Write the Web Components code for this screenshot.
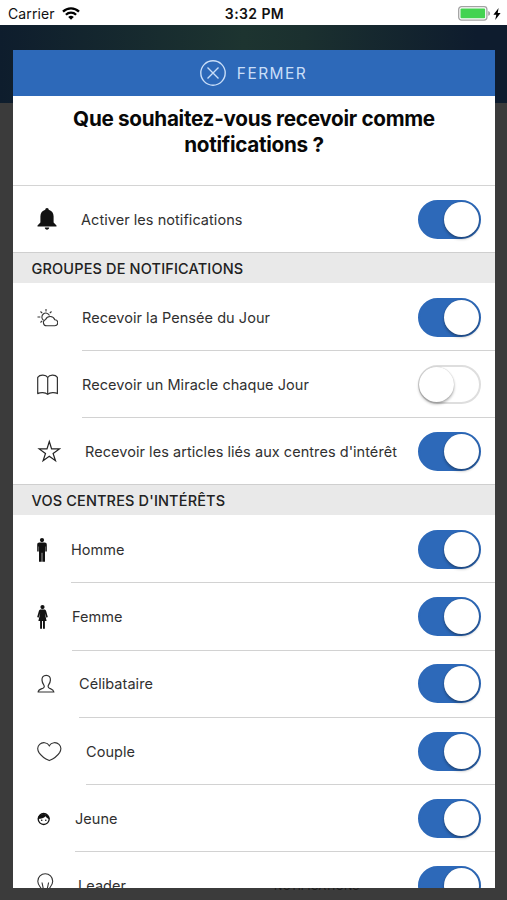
<!DOCTYPE html>
<html lang="fr">
<head>
<meta charset="utf-8">
<title>Notifications</title>
<style>
  html, body {
    margin: 0;
    height: 100%;
    overflow: hidden;
    background: #3b3b3b;
  }
  body {
    font-family: Inter, "Liberation Sans", sans-serif;
    color: #303030;
  }
</style>
</head>
<body>
<notifications-screen>
  <status-bar slot="status" carrier="Carrier" time="3:32 PM"></status-bar>
  <modal-sheet close-label="FERMER">
    <sheet-title>Que souhaitez-vous recevoir comme<br>notifications ?</sheet-title>
    <toggle-row icon="bell" class="last" checked>Activer les notifications</toggle-row>
    <list-divider>GROUPES DE NOTIFICATIONS</list-divider>
    <toggle-row icon="weather" checked>Recevoir la Pensée du Jour</toggle-row>
    <toggle-row icon="book">Recevoir un Miracle chaque Jour</toggle-row>
    <toggle-row icon="star" class="last" checked>Recevoir les articles liés aux centres d'intérêt</toggle-row>
    <list-divider>VOS CENTRES D'INTÉRÊTS</list-divider>
    <toggle-row icon="man" checked>Homme</toggle-row>
    <toggle-row icon="woman" checked>Femme</toggle-row>
    <toggle-row icon="person" checked>Célibataire</toggle-row>
    <toggle-row icon="heart" checked>Couple</toggle-row>
    <toggle-row icon="face" checked>Jeune</toggle-row>
    <toggle-row icon="bulb" checked>Leader</toggle-row>
  </modal-sheet>
</notifications-screen>

<script>
// width is the space the glyph takes in the row, the label follows it
const ICONS = {
  bell: { width: 20, height: 24, body: `
    <path fill="#111" d="M10 1c1.1 0 1.700.8 1.700 1.800 3 .8 4.900 3.100 4.900 6.500v6.200l2.900 3.100v.9H.5v-.9l2.900-3.100V9.300c0-3.400 1.900-5.700 4.900-6.500C8.300 1.800 8.900 1 10 1zM7.800 20.600h4.400c0 1.300-1 2.200-2.200 2.200s-2.200-.9-2.200-2.200z"/>` },
  weather: { width: 21, height: 20, body: `
    <g fill="none" stroke="#333" stroke-width="1.100">
      <path d="M6.500 12.300A4 4 0 1 1 12.500 7.400"/>
      <path d="M9 1v2.600M3.500 3.500l1.700 1.700M.5 9h2.800M3.500 14.500l1.700-1.700M14.500 3.500l-1.700 1.700"/>
      <path d="M9.700 17.800h8a3 3 0 0 0 .1-6 5 5 0 0 0-9.200-.4 3.300 3.300 0 0 0 1.100 6.400z"/>
    </g>` },
  book: { width: 21, height: 22, body: `
    <path fill="none" stroke="#333" stroke-width="1.200" stroke-linejoin="round" d="M10.700 3.500C9 .5 3 .2.700 3.300V19.600c2.800-1.500 7.500-1.500 10 .8 2.500-2.300 7.200-2.300 9.700-.8V3.300C18.200.2 12.500.5 10.700 3.500zM10.700 3.500v17"/>` },
  star: { width: 24, height: 24, body: `
    <path fill="none" stroke="#222" stroke-width="1.200" d="M12.300 2.500l2.300 7.400h7.800l-6.300 4.500 2.400 7.300-6.200-4.500-6.200 4.500 2.400-7.300-6.300-4.500H10z"/>` },
  man: { width: 10, height: 26, body: `
    <g fill="#111"><circle cx="5" cy="3.100" r="2.100"/>
    <path d="M2.400 5.600h5.200c1.400 0 2.200.9 2.200 2.200v6.700H8.300V9.400H8v15.400H5.300v-9h-.6v9H2V9.400h-.3v5.100H.2V7.800C.2 6.500 1 5.600 2.400 5.600z"/></g>` },
  woman: { width: 11, height: 26, body: `
    <g fill="#111"><circle cx="5.500" cy="3.100" r="2.100"/>
    <path d="M4 5.600h3c1.300 0 1.900.6 2.200 1.700l1.600 5.800-1.300.6-1.700-4.600 1.800 7.900H7.900v7.800H6V17h-1v7.800H3.100V17H1.400l1.800-7.900-1.700 4.600-1.300-.6 1.600-5.800C2.100 6.200 2.700 5.600 4 5.600z"/></g>` },
  person: { width: 18, height: 20, body: `
    <path fill="none" stroke="#333" stroke-width="1.200" stroke-linejoin="round" d="M9.200 1.400c2.900 0 4.400 1.900 4.200 4.700-.1 2.100-.9 3.600-1.900 5.100-.7 1.100-.4 2.500.9 3 2.500 1 4.100 1.200 4.500 3.800H1.100c.4-2.600 2.200-2.800 4.900-3.800 1.300-.5 1.600-1.900.9-3C5.900 9.700 5.100 8.200 5 6.100c-.2-2.800 1.300-4.700 4.200-4.700z"/>` },
  heart: { width: 25, height: 22, body: `
    <path fill="none" stroke="#333" stroke-width="1.100" d="M12.300 4.800C10.200.9 5.200.9 2.600 3.300.3 5.600.4 8.900 2 11.600c2.200 3.400 5.800 6 10.300 8 4.500-2 8.100-4.600 10.300-8 1.600-2.700 1.700-6-.6-8.300-2.600-2.400-7.600-2.400-9.700 1.500z"/>` },
  face: { width: 14, height: 14, body: `
    <circle cx="6.700" cy="7" r="5.500" fill="none" stroke="#111" stroke-width="1.300"/>
    <path fill="#111" d="M.8 7A6 6 0 0 1 12.600 7C10.500 6.600 9.300 5.500 8.600 4.200 6.800 6.200 4.200 6.800.8 7z"/>
    <circle cx="4.700" cy="8.200" r=".8" fill="#111"/><circle cx="8.800" cy="8.200" r=".8" fill="#111"/>` },
  bulb: { width: 17, height: 26, body: `
    <g fill="none" stroke="#333" stroke-width="1.100">
      <path d="M5 18.500C5 14.500.8 12.900.8 8.200a7.400 7.400 0 0 1 14.900 0c0 4.700-4.200 6.300-4.200 10.300zM5.300 21h6.200M6 23.500h5"/>
      <path d="M6.900 18.500L5 9.500M9.700 18.500l1.900-9"/>
    </g>` }
};

class NotificationsScreen extends HTMLElement {
  constructor() {
    super();
    this.attachShadow({ mode: 'open' });
    this.shadowRoot.innerHTML = `
      <style>
      :host {
        display: flex;
        flex-direction: column;
        height: 900px;
        position: relative;
        overflow: hidden;
      }
      .stage {
        flex: 1;
        display: flex;
        flex-direction: column;
        padding: 25px 12px 12px 13px;
        background: linear-gradient(90deg, #0e1d2d, #1d3430 48%, #1b302f 60%, #0e1c2e 94%) 0 0 / 100% 78px no-repeat, #3b3b3b;
        min-height: 0;
      }
      /* tab of the page below the sheet */
      .tab {
        position: absolute;
        left: 274px;
        top: 879px;
        font-size: 11px;
        line-height: 14px;
        letter-spacing: .1px;
        color: #1c1c1c;
      }
      ::slotted(modal-sheet) { position: relative; }
      </style>
      <slot name="status"></slot>
      <div class="stage">
        <span class="tab">NOTIFICATIONS</span>
        <slot></slot>
      </div>
    `;
  }
}

class StatusBar extends HTMLElement {
  constructor() {
    super();
    this.attachShadow({ mode: 'open' });
    const carrier = this.getAttribute('carrier');
    const time = this.getAttribute('time');
    this.shadowRoot.innerHTML = `
      <style>
      :host {
        display: grid;
        grid-template-columns: 1fr auto 1fr;
        align-items: center;
        box-sizing: border-box;
        height: 25px;
        padding: 2px 6px 0 8px;
        background: #fff;
        color: #111;
        font-size: 14px;
      }
      .left, .right { display: flex; align-items: center; }
      .left { gap: 7px; letter-spacing: .1px; }
      .right { justify-content: flex-end; gap: 2px; }
      b { font-weight: 600; font-size: 14px; letter-spacing: .4px; }
      svg { display: block; }
      </style>
      <div class="left">
        <span>${carrier}</span>
        <svg width="18" height="13" viewBox="0 0 18 13">
          <g fill="none" stroke="#000" stroke-width="2.300">
            <path d="M1 4.700a11.500 11.500 0 0 1 16 0"/><path d="M3.900 7.700a7.300 7.300 0 0 1 10.200 0"/>
          </g>
          <path d="M9 12.800L6.200 10a4 4 0 0 1 5.600 0z"/>
        </svg>
      </div>
      <b>${time}</b>
      <div class="right">
        <svg width="33" height="15" viewBox="0 0 33 15">
          <rect x=".7" y=".7" width="28.200" height="13.400" rx="2.800" fill="#fff" stroke="#a3a3a3" stroke-width="1.300"/>
          <rect x="2.500" y="2.500" width="24.600" height="9.800" rx="1" fill="#43d351"/>
          <path fill="#a3a3a3" d="M30.200 5c1.300.5 1.900 1.300 1.900 2.400s-.6 1.900-1.900 2.400z"/>
        </svg>
        <svg width="8" height="12" viewBox="0 0 8 12"><path d="M5.600 0L.4 6.700h2.900L2.200 12l5.400-7H4.700z"/></svg>
      </div>
    `;
  }
}

class ModalSheet extends HTMLElement {
  constructor() {
    super();
    this.attachShadow({ mode: 'open' });
    this.shadowRoot.innerHTML = `
      <style>
      :host {
        display: flex;
        flex-direction: column;
        flex: 1;
        min-height: 0;
        overflow: hidden;
        background: #fff;
      }
      header {
        flex: none;
        display: flex;
        align-items: center;
        justify-content: center;
        gap: 11px;
        height: 46px;
        padding-right: 1px;
        background: #2d69b9;
        color: #c9def8;
        font-size: 15.500px;
        letter-spacing: 1.450px;
      }
      svg { display: block; }
      </style>
      <header>
        <svg width="26" height="26" viewBox="0 0 26 26" fill="none" stroke="#c9def8" stroke-width="1.400">
          <circle cx="13" cy="13" r="12.200"/><path d="M7.500 7.500l11 11M18.500 7.500l-11 11"/>
        </svg>
        <span>${this.getAttribute('close-label')}</span>
      </header>
      <slot></slot>
    `;
  }
}

class SheetTitle extends HTMLElement {
  constructor() {
    super();
    this.attachShadow({ mode: 'open' });
    this.shadowRoot.innerHTML = `
      <style>
      :host {
        display: block;
        flex: none;
        box-sizing: border-box;
        height: 90.400px;
        padding-top: 10px;
        border-bottom: 1px solid #d4d4d4;
        text-align: center;
        font-size: 20.700px;
        line-height: 26px;
        letter-spacing: -.3px;
        font-weight: 700;
        color: #080808;
      }
      </style>
      <slot></slot>
    `;
  }
}

class ListDivider extends HTMLElement {
  constructor() {
    super();
    this.attachShadow({ mode: 'open' });
    this.shadowRoot.innerHTML = `
      <style>
      :host {
        display: flex;
        align-items: center;
        flex: none;
        box-sizing: border-box;
        height: 31.500px;
        padding-left: 18.500px;
        border-top: 1px solid #cfcfcf;
        border-bottom: 1px solid #fff;
        background: #e9e9e9;
        font-size: 14.500px;
        letter-spacing: .15px;
        font-weight: 500;
        color: #222;
      }
      </style>
      <slot></slot>
    `;
  }
}

class ToggleSwitch extends HTMLElement {
  constructor() {
    super();
    this.attachShadow({ mode: 'open' });
    this.shadowRoot.innerHTML = `
      <style>
      :host {
        display: flex;
        align-items: center;
        flex: none;
        box-sizing: border-box;
        width: 63px;
        height: 39px;
        border-radius: 20px;
        border: 2px solid #dedede;
        background: #fff;
      }
      :host([checked]) {
        justify-content: flex-end;
        border-color: #2d69b9;
        background: #2d69b9;
      }
      i {
        flex: none;
        width: 35px;
        height: 35px;
        border-radius: 50%;
        background: #fff;
        box-shadow: 0 2px 3px rgba(0, 0, 0, .32), 0 0 1px rgba(0, 0, 0, .25);
      }
      :host(:not([checked])) i { margin-left: -1px; }
      </style>
      <i></i>
    `;
  }
}

class ToggleRow extends HTMLElement {
  constructor() {
    super();
    this.attachShadow({ mode: 'open' });
    const icon = ICONS[this.getAttribute('icon')];
    const checked = this.hasAttribute('checked') ? 'checked' : '';
    this.shadowRoot.innerHTML = `
      <style>
      :host {
        display: flex;
        align-items: stretch;
        flex: none;
        height: 67.300px;
        padding-left: 24px;
        gap: 24px;
        font-size: 14.500px;
        letter-spacing: .05px;
      }
      :host(.last) { height: 66px; }
      svg {
        flex: none;
        align-self: center;
        display: block;
      }
      .inner {
        flex: 1;
        display: flex;
        align-items: center;
        justify-content: space-between;
        padding-right: 14.500px;
        border-bottom: 1px solid #d2d2d2;
        white-space: nowrap;
      }
      :host(.last) .inner { border-bottom: 0; }
      </style>
      <svg width="${icon.width}" height="${icon.height}" viewBox="0 0 ${icon.width} ${icon.height}">${icon.body}</svg>
      <div class="inner">
        <span><slot></slot></span>
        <toggle-switch ${checked}></toggle-switch>
      </div>
    `;
  }
}

customElements.define('toggle-switch', ToggleSwitch);
customElements.define('toggle-row', ToggleRow);
customElements.define('list-divider', ListDivider);
customElements.define('sheet-title', SheetTitle);
customElements.define('modal-sheet', ModalSheet);
customElements.define('status-bar', StatusBar);
customElements.define('notifications-screen', NotificationsScreen);
</script>
</body>
</html>
